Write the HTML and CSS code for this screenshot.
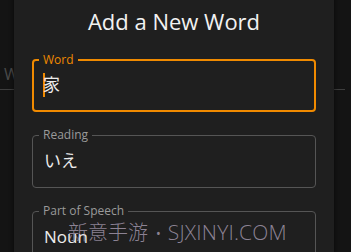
FILE: index.html
```html
<!DOCTYPE html>
<html>
<head>
<meta charset="utf-8">
<link rel="stylesheet" href="styles.css">
</head>
<body>
<div class="page">
  <div class="under-field">
    <span class="under-label">Word</span>
  </div>
</div>
<div class="dialog">
  <h1 class="title">Add a New Word</h1>
  <div class="fields">
    <fieldset class="field focused">
      <legend>Word</legend>
      <div class="value"><span class="caret"></span>家</div>
    </fieldset>
    <fieldset class="field">
      <legend>Reading</legend>
      <div class="value">いえ</div>
    </fieldset>
    <fieldset class="field">
      <legend>Part of Speech</legend>
      <div class="value">Noun</div>
    </fieldset>
  </div>
</div>
<div class="watermark"><span class="wm-cjk">新意手游</span><span class="wm-dot">•</span><span class="wm-latin">SJXINYI.COM</span></div>
</body>
</html>
```
FILE: styles.css
```css
html, body {
  margin: 0;
  padding: 0;
  width: 351px;
  height: 252px;
  overflow: hidden;
  background: #141414;
  font-family: "Open Sans", "Noto Sans", "Noto Sans CJK JP", sans-serif;
}

.page {
  padding-top: 64px;
}

.under-field {
  width: 345px;
  height: 26px;
  border-bottom: 1px solid #3e3e3e;
  box-sizing: border-box;
}

.under-label {
  display: block;
  padding-left: 4px;
  font-size: 16px;
  line-height: 20px;
  color: #4a4a4a;
}

.dialog {
  position: absolute;
  left: 14px;
  top: -20px;
  width: 320px;
  height: 300px;
  background: #1f1f1f;
  border-radius: 6px;
  box-shadow: 0 0 4px 1px rgba(0, 0, 0, 0.45);
  padding: 0 18px;
  box-sizing: border-box;
}

.title {
  margin: 26px 0 0;
  font-size: 22px;
  line-height: 30px;
  font-weight: 400;
  color: #f2f2f2;
  text-align: center;
}

.fields {
  display: flex;
  flex-direction: column;
  gap: 16px;
  margin-top: 17px;
}

.field {
  margin: 0;
  padding: 0 6px 14px 6px;
  border: 1px solid #555;
  border-radius: 4px;
  min-width: 0;
}

.field legend {
  padding: 0 4px;
  font-size: 12px;
  line-height: 14px;
  color: #9a9a9a;
}

.field.focused {
  border: 2px solid #f08a00;
  padding: 0 5px 13px 5px;
}

.field.focused legend {
  color: #f08a00;
}

.value {
  padding-top: 7px;
  padding-left: 5px;
  font-size: 17px;
  line-height: 24px;
  height: 24px;
  color: #ececec;
  font-family: "Open Sans", "Noto Sans CJK JP", sans-serif;
}

.focused .value {
  padding-left: 4px;
  padding-top: 6px;
}

.caret {
  display: inline-block;
  width: 2px;
  height: 24px;
  background: #f08a00;
  vertical-align: top;
  margin-right: -2px;
}

.watermark {
  position: absolute;
  left: 68px;
  top: 217px;
  display: flex;
  align-items: baseline;
  font-family: "Open Sans", sans-serif;
  font-weight: 300;
  font-size: 21px;
  line-height: 30px;
  color: rgba(190, 175, 200, 0.7);
  white-space: nowrap;
}

.wm-cjk {
  font-family: "Noto Sans CJK SC", sans-serif;
  font-size: 20px;
  font-weight: 300;
}

.wm-dot {
  margin: 0 6px 0 7px;
  font-size: 18px;
}

.wm-latin {
  letter-spacing: 0.2px;
}
```
